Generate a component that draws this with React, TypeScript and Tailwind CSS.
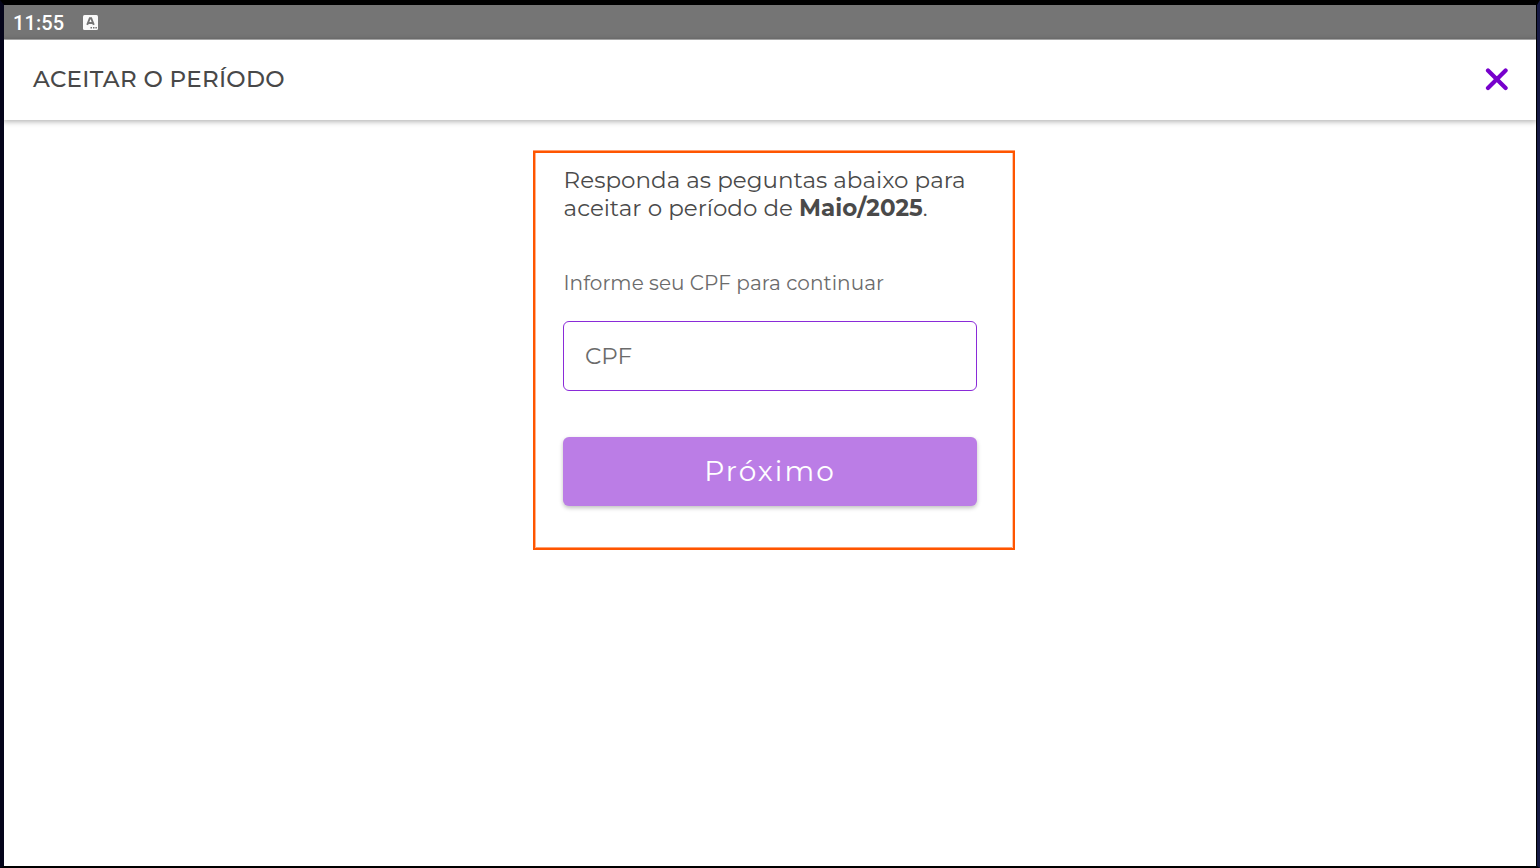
import React from 'react';

const AppBadge: React.FC = () => (
  <svg width="15" height="15" viewBox="0 0 15 15">
    <rect width="15" height="15" rx="1.5" fill="#fafafa" />
    <path d="M4.2 9.8 6.8 3.2h1.4l2.6 6.6M5.4 8h4.2" fill="none" stroke="#757575" strokeWidth="1.9" />
    <path d="M7.5 12h1.5v1.5H7.5zM10 12h1.5v1.5H10zM12.4 12h1.5v1.5h-1.5z" fill="#757575" />
  </svg>
);

const CloseIcon: React.FC = () => (
  <svg width="24" height="24" viewBox="0 0 24 24">
    <path d="M3 3.5 20.6 21.1M20.6 3.5 3 21.1" stroke="#7700cc" strokeWidth="4.2" strokeLinecap="round" />
  </svg>
);

const StatusBar: React.FC = () => (
  <div className="flex h-[35px] shrink-0 items-center border-b border-[#bababa] bg-[#757575] pl-[9px] text-white">
    <span className="mt-0.5 w-[70px] font-[Roboto] text-[20px] leading-6 font-medium tracking-[0.1px]">11:55</span>
    <AppBadge />
  </div>
);

const Header: React.FC<{ title: string }> = ({ title }) => (
  <header className="flex h-20 shrink-0 items-center justify-between bg-white pr-[27px] pb-0.5 pl-[29px] shadow-[0_1px_5px_1px_rgba(0,0,0,0.28)]">
    <h1 className="text-[23px] leading-7 font-medium tracking-[0.3px] whitespace-nowrap text-[#484848]">{title}</h1>
    <button aria-label="Fechar">
      <CloseIcon />
    </button>
  </header>
);

export default function App() {
  const [cpf, setCpf] = React.useState('');

  return (
    <div className="h-screen w-full overflow-hidden border-t-[5px] border-r-[3px] border-b-2 border-l-4 border-t-black border-r-[#171a45] border-b-black border-l-[#05051b] font-[Montserrat,Inter,sans-serif]">
      <div className="flex h-full flex-col border-r border-black bg-white">
        <StatusBar />
        <Header title="ACEITAR O PERÍODO" />

        <main className="flex grow items-start pt-[31px] pl-[529px]">
          <section className="h-[399px] w-[482px] border-2 border-[#ff5500] pt-[13px] pr-9 pl-7 shadow-[0_-1px_0_0_#ffa070,inset_1px_0_0_0_#ffb28c,inset_-1px_0_0_0_#ffc8ac,inset_0_-1px_0_0_#ffa070]">
            <p className="pl-[0.6px] text-[23px] leading-7 font-normal tracking-[0.02px] whitespace-nowrap text-[#4a4a4a]">
              Responda as peguntas abaixo para
              <br />
              aceitar o período de <strong className="font-bold">Maio/2025</strong>.
            </p>
            <p className="mt-[47px] pl-[0.5px] text-[20px] leading-7 font-normal tracking-[0.06px] whitespace-nowrap text-[#6b6b6b]">
              Informe seu CPF para continuar
            </p>
            <input
              className="mt-6 block h-[70px] w-full rounded-md border border-[#8a2bd8] px-[21px] text-[23px] font-normal text-[#424242] outline-none placeholder:text-[#6b6b6b]"
              placeholder="CPF"
              value={cpf}
              onChange={(e) => setCpf(e.target.value)}
            />
            <button className="mt-[46px] block h-[69px] w-full rounded-md bg-[#bb7de6] pb-0.5 text-[28px] font-normal tracking-[2.05px] text-white shadow-[0_2px_4px_rgba(0,0,0,0.25)]">
              Próximo
            </button>
          </section>
        </main>
      </div>
    </div>
  );
}
